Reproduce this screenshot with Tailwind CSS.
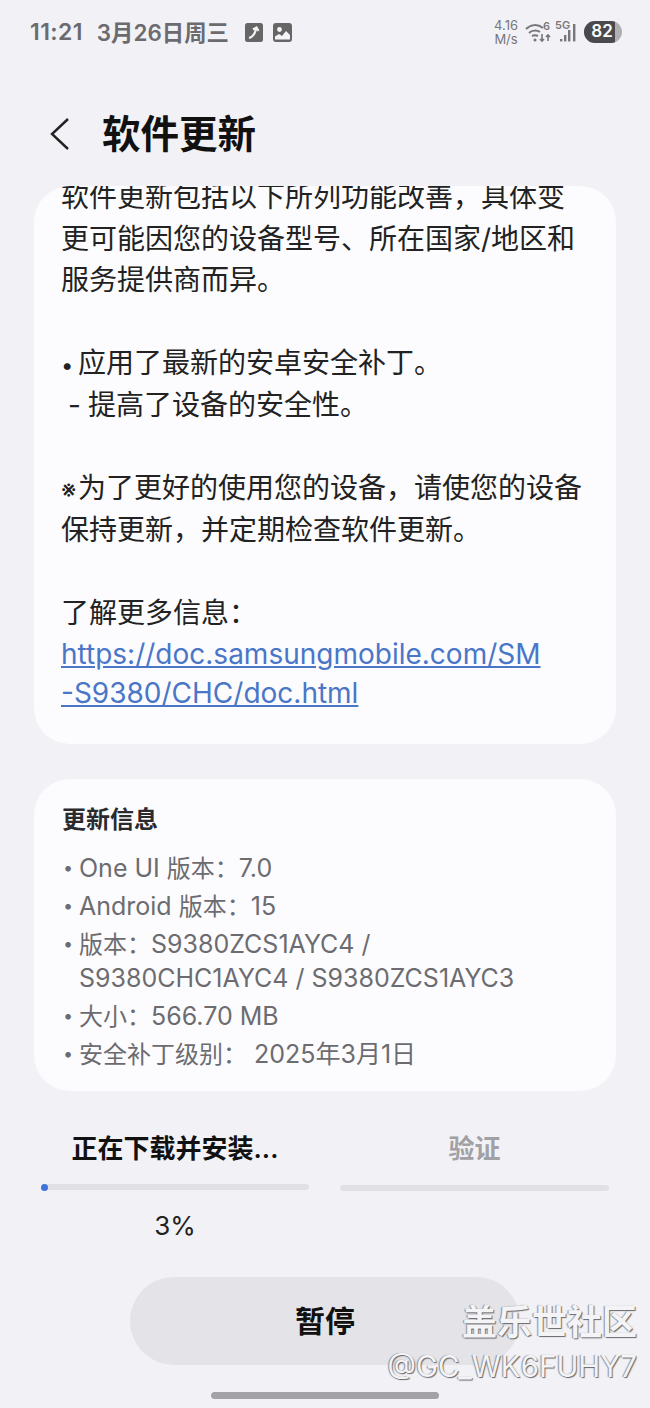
<!DOCTYPE html>
<html lang="zh-CN">
<head>
    <meta charset="UTF-8">
    <title>软件更新</title>
    <script src="https://cdn.jsdelivr.net/npm/@tailwindcss/browser@4"></script>
</head>
<body class="bg-[#f2f2f6] font-['Inter','Noto_Sans_CJK_SC',sans-serif]">
<div class="relative w-[650px] h-[1408px] overflow-hidden bg-[#f2f2f6]">

    <!-- Status bar -->
    <div class="h-[64px] pl-[30px] pr-[28px] flex items-center justify-between">
        <div class="flex items-center text-[#6b6b6f] font-semibold mt-[1px]">
            <span class="text-[23px] tracking-[0.4px]">11:21</span>
            <span class="ml-[14px] text-[22.4px]">3月26日周三</span>
            <svg class="ml-[16px]" width="18" height="19" viewBox="0 0 18 19">
                <rect width="18" height="19" rx="2.5" fill="#666"/>
                <path d="M4 15c4-1 6-4 7-9M8 6.5l3.5-2 2 3.5" fill="none" stroke="#f2f2f6" stroke-width="2.2"/>
            </svg>
            <svg class="ml-[10px]" width="19" height="19" viewBox="0 0 19 19">
                <rect width="19" height="19" rx="3" fill="#666"/>
                <circle cx="6.5" cy="6.5" r="2.4" fill="#f6f6f8"/>
                <path d="M2 16.5v-3l4-2.5 3 2 4-5 4 4v4.5H2z" fill="#f6f6f8"/>
            </svg>
        </div>
        <div class="flex items-center text-[#77777b]">
            <div class="text-[13px] leading-[14px] text-center">4.16<br>M/s</div>
            <div class="relative ml-[7px] w-[26px] h-[22px]">
                <svg class="absolute left-0 top-0" width="26" height="22" viewBox="0 0 26 22">
                    <path d="M1 8c5-5 12-5 17-1M4 12c3-3 8-3 11-1M7 15c2-1 4-1 6 0" fill="none" stroke="#77777b" stroke-width="2"/>
                    <circle cx="10" cy="19" r="1.5" fill="#77777b"/>
                    <path d="M17 13v7M15 18l2 2 2-2M23 20v-6M21 16l2-2 2 2" fill="none" stroke="#77777b" stroke-width="1.6"/>
                </svg>
                <span class="absolute left-[18px] top-[-1px] text-[11px] leading-[13px] font-semibold">6</span>
            </div>
            <div class="relative ml-[4px] w-[23px] h-[24px]">
                <span class="absolute left-0 top-[-3px] text-[11px] font-semibold">5G</span>
                <svg class="absolute left-0 top-0" width="23" height="24" viewBox="0 0 23 24">
                    <rect x="5" y="19" width="2.4" height="2.4" fill="#77777b"/>
                    <rect x="9" y="15" width="2.4" height="6.4" fill="#77777b"/>
                    <rect x="13" y="10" width="2.4" height="11.4" fill="#77777b"/>
                    <rect x="18" y="4" width="2.4" height="17.4" fill="#77777b"/>
                </svg>
            </div>
            <div class="relative ml-[6px] w-[38px] h-[22px] rounded-full bg-[#b0b0b4] overflow-hidden">
                <div class="absolute left-0 top-0 h-full w-[31px] bg-[#4a4a4e]"></div>
                <span class="absolute left-0 top-0 w-[36px] h-full flex items-center justify-center text-white font-semibold text-[17px]">82</span>
            </div>
        </div>
    </div>

    <!-- Title -->
    <div class="h-[115px] pt-[26px] pl-[49px] flex items-center">
        <svg width="20" height="34" viewBox="0 0 20 34" class="mt-[-2px]">
            <path d="M19 2L3 17l16 15" fill="none" stroke="#222" stroke-width="2.4"/>
        </svg>
        <h1 class="ml-[33px] text-[38.5px] font-bold text-[#111] leading-none">软件更新</h1>
    </div>

    <!-- Release notes -->
    <div class="mx-[34px] h-[558px] mt-[7px] bg-[#fcfcfe] rounded-[36px] relative overflow-hidden pl-[27px] text-[28px] leading-[41.6px] text-[#222]">
        <div class="mt-[-9px] w-[540px]">
            <p>软件更新包括以下所列功能改善，具体变<br>更可能因您的设备型号、所在国家/地区和<br>服务提供商而异。</p>
            <p class="mt-[41.6px]"><span class="inline-block w-[17px] text-[22px] leading-none">•</span>应用了最新的安卓安全补丁。</p>
            <p><span class="inline-block w-[27px] pl-[7px] leading-none">-</span>提高了设备的安全性。</p>
            <p class="mt-[41.6px]"><span class="inline-block w-[17px] text-[24px] leading-none">※</span>为了更好的使用您的设备，请使您的设备<br>保持更新，并定期检查软件更新。</p>
            <p class="mt-[41.6px]">了解更多信息：</p>
            <a class="block text-[#4a76c8] underline leading-[39.5px]">https://doc.samsungmobile.com/SM<br>-S9380/CHC/doc.html</a>
        </div>
    </div>

    <!-- Update info -->
    <div class="mx-[34px] mt-[35px] h-[312px] bg-[#fcfcfe] rounded-[36px] pl-[28px] pt-[25px]">
        <h2 class="text-[24px] font-semibold leading-[32px] text-[#2b2b2e]">更新信息</h2>
        <ul class="mt-[13px] text-[25px] leading-[34px] text-[#6c6c70]">
            <li class="flex py-[2px]"><span class="w-[17px] pl-[1px] text-[18px]">•</span><span>One UI <span class="text-[24px] leading-none">版本：</span>7.0</span></li>
            <li class="flex py-[2px]"><span class="w-[17px] pl-[1px] text-[18px]">•</span><span>Android <span class="text-[24px] leading-none">版本：</span>15</span></li>
            <li class="flex py-[2px]"><span class="w-[17px] pl-[1px] text-[18px]">•</span><span><span class="text-[24px] leading-none">版本：</span>S9380ZCS1AYC4 /<br>S9380CHC1AYC4 / S9380ZCS1AYC3</span></li>
            <li class="flex py-[2px]"><span class="w-[17px] pl-[1px] text-[18px]">•</span><span><span class="text-[24px] leading-none">大小：</span>566.70 MB</span></li>
            <li class="flex py-[2px]"><span class="w-[17px] pl-[1px] text-[18px]">•</span><span><span class="text-[24px] leading-none">安全补丁级别：</span> 2025年3月1日</span></li>
        </ul>
    </div>

    <!-- Progress -->
    <div class="mt-[40px] pl-[41px] pr-[41px] flex gap-[31px]">
        <div class="w-[268px]">
            <div class="text-center text-[26px] font-semibold leading-[36px] text-[#111]">正在下载并安装...</div>
            <div class="mt-[17px] h-[6px] rounded-full bg-[#e1e1e5] relative">
                <div class="absolute left-0 top-0 w-[7px] h-[7px] rounded-full bg-[#3f74d9]"></div>
            </div>
            <div class="mt-[18px] text-center text-[26px] leading-[36px] text-[#222]">3%</div>
        </div>
        <div class="w-[269px]">
            <div class="text-center text-[26px] font-semibold leading-[36px] text-[#a1a1a5]">验证</div>
            <div class="mt-[18px] h-[6px] rounded-full bg-[#e1e1e5]"></div>
        </div>
    </div>

    <!-- Pause button -->
    <div class="mt-[33px] w-[390px] h-[88px] ml-[130px] rounded-full bg-[#e4e4e8] flex items-center justify-center text-[30px] font-bold text-[#111]">暂停</div>

    <!-- Watermark -->
    <div class="absolute right-[13px] top-[1300px] text-right text-[#f4f4f6] [text-shadow:1px_1px_1px_#66666a,-1px_0_1px_#8e8e92]">
        <div class="text-[35px] font-bold leading-[44px]">盖乐世社区</div>
        <div class="text-[29.5px] leading-[40px] mt-[2px] whitespace-nowrap">@GC_WK6FUHY7</div>
    </div>

    <!-- Gesture bar -->
    <div class="absolute left-[211px] top-[1392px] w-[228px] h-[7px] rounded-full bg-[#a3a3a7]"></div>
</div>
</body>
</html>
